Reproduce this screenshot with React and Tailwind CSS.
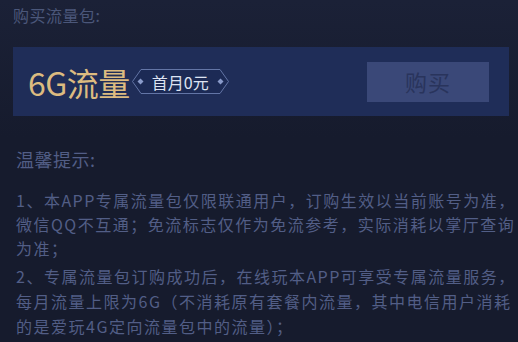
import React from "react";

const Badge = ({ text }) => (
  <div className="relative ml-[2px] flex h-[25px] w-[97px] items-center justify-center">
    <svg className="absolute inset-0" width="97" height="25" viewBox="0 0 97 25">
      <polygon
        points="9,0.5 88,0.5 96.5,12.5 88,24.5 9,24.5 0.5,12.5"
        fill="#1c2a55"
        stroke="#6375a6"
        strokeWidth="1"
      />
      <polygon points="8.5,9.5 11.5,12.5 8.5,15.5 5.5,12.5" fill="#8a9bcb" />
      <polygon points="88.5,9.5 91.5,12.5 88.5,15.5 85.5,12.5" fill="#8a9bcb" />
    </svg>
    <span className="relative text-[16px] leading-none text-[#dde3f2]">{text}</span>
  </div>
);

export default function App() {
  return (
    <div
      className="h-[342px] w-[518px] overflow-hidden bg-[#161b2e] bg-gradient-to-b from-[#1b2137] to-[#161b2d] to-[40%]"
      style={{ fontFamily: '"Noto Sans CJK SC", "Noto Sans", sans-serif' }}
    >
      <div className="px-[13px] pt-[4px] text-[16px] leading-[22px] tracking-[0.5px] text-[#4b577a]">购买流量包:</div>

      {/* package card */}
      <div className="ml-[13px] mr-[9px] mt-[21px] flex h-[69px] items-center justify-between bg-[#1f2d58] pl-[15px] pr-[20px]">
        <div className="flex items-center">
          <span className="text-[32px] leading-none tracking-[-0.5px] text-[#dcbb80]">6G流量</span>
          <Badge text="首月0元" />
        </div>
        <button className="flex h-[40px] w-[122px] items-center justify-center bg-[#3a4878] text-[22px] tracking-[1px] text-[#29345c]">
          购买
        </button>
      </div>

      {/* tips */}
      <div className="px-[16px] pt-[31px] text-[#525e86]">
        <div className="text-[18px] leading-[24px] tracking-[0.5px]">温馨提示:</div>
        <p className="mt-[17px] whitespace-nowrap text-[16px] leading-[24px] tracking-[1.5px]">
          1、本APP专属流量包仅限联通用户，订购生效以当前账号为准，
          <br />
          微信QQ不互通；免流标志仅作为免流参考，实际消耗以掌厅查询
          <br />
          为准；
        </p>
        <p className="mt-[4px] whitespace-nowrap text-[16px] leading-[25px] tracking-[1.5px]">
          2、专属流量包订购成功后，在线玩本APP可享受专属流量服务，
          <br />
          每月流量上限为6G（不消耗原有套餐内流量，其中电信用户消耗
          <br />
          的是爱玩4G定向流量包中的流量）；
        </p>
      </div>
    </div>
  );
}
